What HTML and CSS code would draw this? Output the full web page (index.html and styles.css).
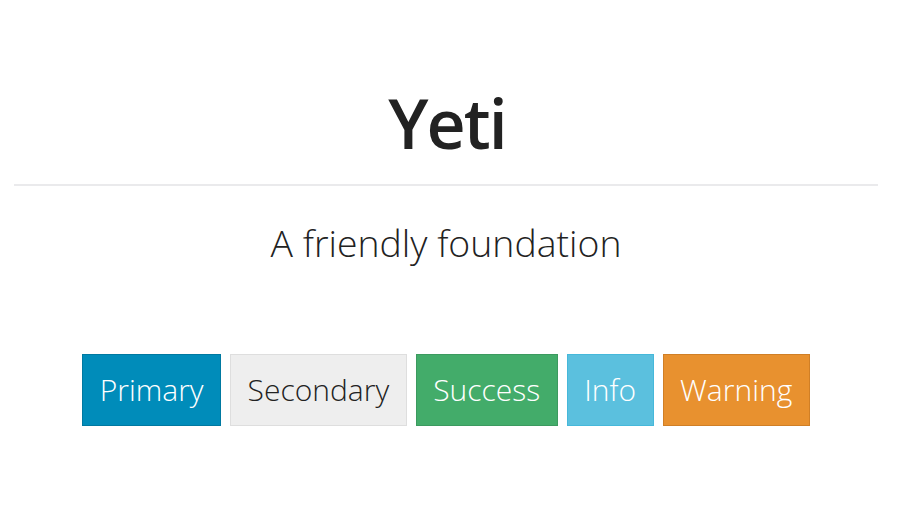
FILE: index.html
```html
<!DOCTYPE html>
<html>
<head>
<meta charset="utf-8">
<link rel="stylesheet" href="styles.css">
</head>
<body>
<div class="page">
  <h1 class="title">Yeti</h1>
  <hr class="rule">
  <p class="lead">A friendly foundation</p>
  <div class="buttons">
    <button class="btn btn-primary">Primary</button>
    <button class="btn btn-secondary">Secondary</button>
    <button class="btn btn-success">Success</button>
    <button class="btn btn-info">Info</button>
    <button class="btn btn-warning">Warning</button>
  </div>
</div>
</body>
</html>
```
FILE: styles.css
```css
html, body {
  margin: 0;
  padding: 0;
  background: #fff;
}
body {
  font-family: "Open Sans", "Liberation Sans", sans-serif;
  color: #222;
}
.page {
  margin: 0 22px 0 14px;
  display: flex;
  flex-direction: column;
  align-items: center;
}
.title {
  margin: 83px 0 0 0;
  padding-left: 2px;
  font-size: 68px;
  font-weight: 600;
  line-height: 80px;
  letter-spacing: -2px;
  color: #222;
}
.rule {
  align-self: stretch;
  margin: 21px 0 0 0;
  border: 0;
  border-top: 2px solid #eaeaec;
  height: 0;
}
.lead {
  margin: 32px 0 0 0;
  font-size: 37.4px;
  font-weight: 300;
  line-height: 50px;
}
.buttons {
  margin-top: 86px;
  display: flex;
  gap: 9px;
}
.btn {
  font-family: "Open Sans", "Liberation Sans", sans-serif;
  font-size: 30px;
  font-weight: 300;
  line-height: 40px;
  padding: 15px 16.5px;
  border: 1px solid;
  border-radius: 0;
  height: 72px;
  box-sizing: border-box;
  color: #fff;
}
.btn-primary { background: #008cba; border-color: #0079a1; }
.btn-secondary { background: #eeeeee; border-color: #dedede; color: #222; }
.btn-success { background: #43ac6a; border-color: #3c9a5f; }
.btn-info { background: #5bc0de; border-color: #46b8da; }
.btn-warning { background: #e8912f; border-color: #d07f26; }
```
